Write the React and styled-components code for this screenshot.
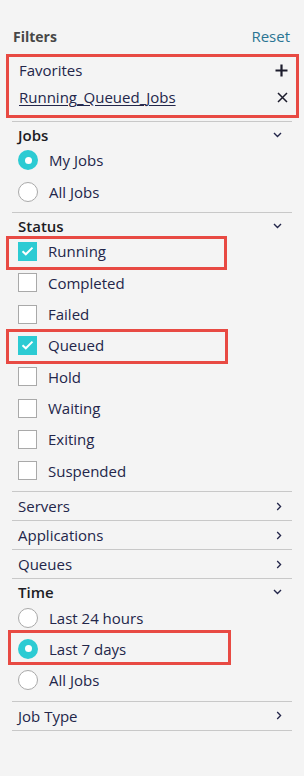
import React from "react";
import styled, { createGlobalStyle } from "styled-components";

const Global = createGlobalStyle`
  html, body { margin: 0; padding: 0; background: #f4f4f4; }
  body { font-family: "Open Sans", "Noto Sans", sans-serif; color: #23264a; }
`;

const Panel = styled.div`
  width: 304px;
  min-height: 776px;
  box-sizing: border-box;
  padding: 24px 12px 0 12px;
  background: #f4f4f4;
`;

const Header = styled.div`
  display: flex;
  justify-content: space-between;
  align-items: center;
  height: 24px;
  padding: 0 2px 0 1px;
`;

const HeaderTitle = styled.span`
  font-size: 14px;
  font-weight: 700;
  color: #474747;
`;

const ResetLink = styled.span`
  font-size: 15px;
  color: #2a7493;
`;

const Highlightable = styled.div`
  position: relative;
  &::after {
    content: "";
    display: ${(p) => (p.$hl ? "block" : "none")};
    position: absolute;
    top: ${(p) => p.$hl?.[0] ?? 0}px;
    right: ${(p) => p.$hl?.[1] ?? 0}px;
    bottom: ${(p) => p.$hl?.[2] ?? 0}px;
    left: ${(p) => p.$hl?.[3] ?? 0}px;
    border: 3px solid #e84a43;
    pointer-events: none;
  }
`;

const Favorites = styled(Highlightable)`
  margin-top: 8.5px;
  padding-bottom: 10.5px;
  border-bottom: 1px solid #c8c8c8;
`;

const FavRow = styled.div`
  display: flex;
  align-items: center;
  justify-content: space-between;
  height: 27px;
  padding: 0 4px 0 7px;
  font-size: 15px;
`;

const FavLink = styled.span`
  text-decoration: underline;
  text-underline-offset: 2px;
  color: #23264a;
`;

const Section = styled.div`
  border-bottom: 1px solid #c8c8c8;
  padding-bottom: ${(p) => (p.$open ? 5 : 0)}px;
`;

const SectionHead = styled.div`
  display: flex;
  align-items: center;
  justify-content: space-between;
  height: ${(p) => (p.$open ? 19.5 : 28)}px;
  padding: ${(p) => (p.$open ? "3px 10px 0 6px" : "0 10px 0 6px")};
  font-size: 15px;
  font-weight: ${(p) => (p.$open ? 600 : 400)};
  color: ${(p) => (p.$open ? "#1c1c24" : "#23264a")};
`;

const OptionRow = styled(Highlightable)`
  display: flex;
  align-items: center;
  gap: 11px;
  height: 31.35px;
  padding-left: 6px;
  font-size: 15px;
  color: #23264a;
`;

const Radio = styled.span`
  width: 20px;
  height: 20px;
  box-sizing: border-box;
  border-radius: 50%;
  flex: none;
  display: flex;
  align-items: center;
  justify-content: center;
  background: ${(p) => (p.$on ? "#2ccbd3" : "#ffffff")};
  border: ${(p) => (p.$on ? "none" : "1px solid #a9a9a9")};
  &::before {
    content: "";
    display: ${(p) => (p.$on ? "block" : "none")};
    width: 7px;
    height: 7px;
    border-radius: 50%;
    background: #ffffff;
  }
`;

const Check = styled.span`
  width: 19px;
  height: 19px;
  box-sizing: border-box;
  flex: none;
  display: flex;
  align-items: center;
  justify-content: center;
  background: ${(p) => (p.$on ? "#2ccbd3" : "#ffffff")};
  border: ${(p) => (p.$on ? "none" : "1px solid #a9a9a9")};
`;

const ChevronDown = () => (
  <svg width="9" height="6" viewBox="0 0 9 6">
    <path d="M1 1 L4.5 4.5 L8 1" fill="none" stroke="#23264a" strokeWidth="1.4" />
  </svg>
);

const ChevronRight = () => (
  <svg width="6" height="9" viewBox="0 0 6 9">
    <path d="M1.2 1 L4.6 4.5 L1.2 8" fill="none" stroke="#23264a" strokeWidth="1.3" />
  </svg>
);

const PlusIcon = () => (
  <svg width="13" height="13" viewBox="0 0 13 13">
    <path d="M6.5 0.5 V12.5 M0.5 6.5 H12.5" stroke="#1c1c2c" strokeWidth="2.2" />
  </svg>
);

const CloseIcon = () => (
  <svg width="11" height="11" viewBox="0 0 11 11">
    <path d="M1 1 L10 10 M10 1 L1 10" stroke="#1c1c2c" strokeWidth="1.5" />
  </svg>
);

const Tick = () => (
  <svg width="13" height="10" viewBox="0 0 13 10">
    <path d="M1.5 5.2 L4.8 8.3 L11.5 1.6" fill="none" stroke="#ffffff" strokeWidth="2" />
  </svg>
);

const RadioOption = ({ label, on, hl }) => (
  <OptionRow $hl={hl}>
    <Radio $on={on} />
    <span>{label}</span>
  </OptionRow>
);

const CheckOption = ({ label, on, hl }) => (
  <OptionRow $hl={hl}>
    <Check $on={on}>{on && <Tick />}</Check>
    <span>{label}</span>
  </OptionRow>
);

const OpenSection = ({ title, children }) => (
  <Section $open>
    <SectionHead $open>
      <span>{title}</span>
      <ChevronDown />
    </SectionHead>
    {children}
  </Section>
);

const ClosedSection = ({ title }) => (
  <Section>
    <SectionHead>
      <span>{title}</span>
      <ChevronRight />
    </SectionHead>
  </Section>
);

const statuses = [
  ["Running", true, [0, 65, -3, -6]],
  ["Completed", false],
  ["Failed", false],
  ["Queued", true, [-1, 64, -3, -6]],
  ["Hold", false],
  ["Waiting", false],
  ["Exiting", false],
  ["Suspended", false],
];

export default function App() {
  return (
    <>
      <Global />
      <Panel>
        <Header>
          <HeaderTitle>Filters</HeaderTitle>
          <ResetLink>Reset</ResetLink>
        </Header>
        <Favorites $hl={[-3, -7, 3.5, -6]}>
          <FavRow>
            <span>Favorites</span>
            <PlusIcon />
          </FavRow>
          <FavRow>
            <FavLink>Running_Queued_Jobs</FavLink>
            <CloseIcon />
          </FavRow>
        </Favorites>
        <OpenSection title="Jobs">
          <RadioOption label="My Jobs" on />
          <RadioOption label="All Jobs" />
        </OpenSection>
        <OpenSection title="Status">
          {statuses.map(([l, on, hl]) => (
            <CheckOption key={l} label={l} on={on} hl={hl} />
          ))}
        </OpenSection>
        <ClosedSection title="Servers" />
        <ClosedSection title="Applications" />
        <ClosedSection title="Queues" />
        <OpenSection title="Time">
          <RadioOption label="Last 24 hours" />
          <RadioOption label="Last 7 days" on hl={[-3, 61, 0, -4]} />
          <RadioOption label="All Jobs" />
        </OpenSection>
        <ClosedSection title="Job Type" />
      </Panel>
    </>
  );
}
